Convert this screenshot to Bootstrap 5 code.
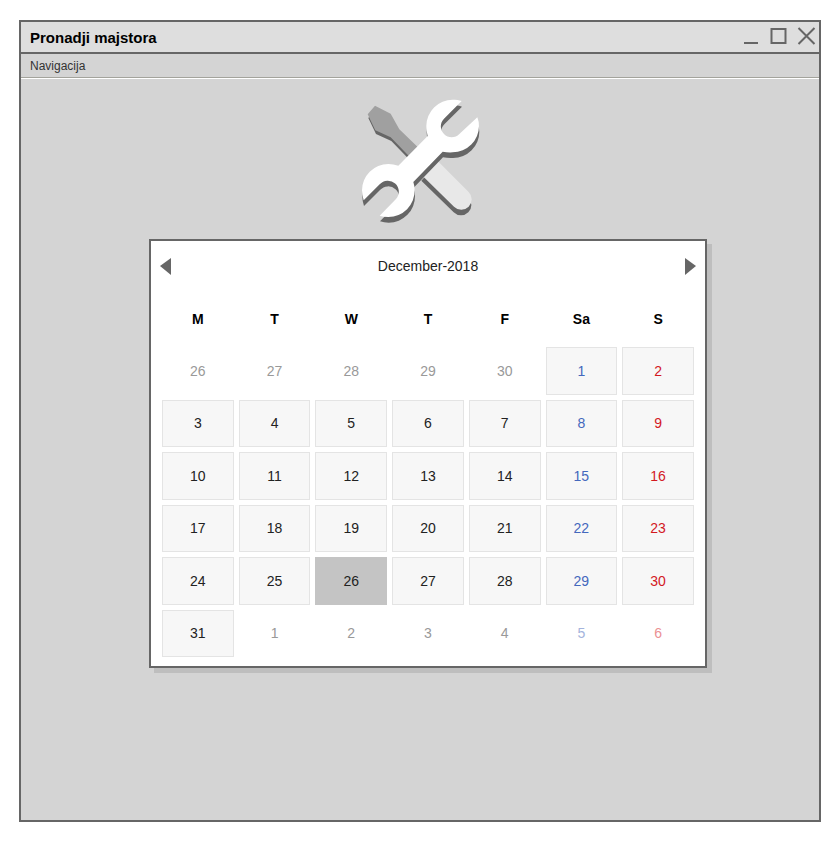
<!DOCTYPE html>
<html lang="sr-Latn">
<head>
<meta charset="utf-8">
<meta name="viewport" content="width=device-width, initial-scale=1">
<title>Pronadji majstora</title>
<link rel="stylesheet" href="https://cdn.jsdelivr.net/npm/bootstrap@5.3.0/dist/css/bootstrap.min.css">
<style>
body { font-family: "Liberation Sans", Arial, sans-serif; font-size: 14px; line-height: 20px; color: #222; background: #fff; padding: 20px 19px 19px; }
.app-window { border: 2px solid #666; background: #d4d4d4; min-height: calc(100vh - 39px); }
.title-bar { background: #dedede; border-bottom: 2px solid #666; height: 32px; padding: 0 3px 0 9px; }
.title-bar h1 { font-size: 15px; line-height: 20px; padding-top: 2px; font-weight: 700; color: #000; }
.plain { border: 0; background: transparent; padding: 0; display: flex; }
.menu-strip { height: 25px; padding: 0 9px; font-size: 12px; border-bottom: 1px solid #fff; box-shadow: inset 0 -1px #a3a39c; }
.menu-strip a { color: #333; }
.logo { margin-top: 11px; }
.shift { padding-left: 16px; }
.calendar { max-width: 558px; margin-top: 9px; border: 2px solid #666; background: #fff; box-shadow: 5px 5px #bebebe; padding: 0 6px 4px; }
.month-bar { height: 49px; padding: 0 2px; }
.month-bar .plain { padding: 1px; }
.days { border-collapse: separate; border-spacing: 5px; table-layout: fixed; height: 372px; }
.days th, .days td { height: 47px; padding: 0; text-align: center; vertical-align: middle; }
.days th { color: #000; }
.day { display: block; width: 100%; height: 100%; padding: 0; border: 1px solid #e4e4e4; background: #f7f7f7; color: #222; }
.sat { color: #4468bd; }
.sun { color: #d3191f; }
.outside { border-color: transparent; background: transparent; color: #999; }
.outside.sat { color: #a4b3dc; }
.outside.sun { color: #eb9093; }
.chosen { background: #c4c4c4; border-color: #c4c4c4; }
</style>
<script src="https://cdn.jsdelivr.net/npm/bootstrap@5.3.0/dist/js/bootstrap.bundle.min.js"></script>
</head>
<body>
<div class="app-window d-flex flex-column">
  <header class="title-bar d-flex align-items-center justify-content-between">
    <h1 class="m-0">Pronadji majstora</h1>
    <div class="d-flex gap-2">
      <button class="plain" type="button" aria-label="Minimize"><svg width="20" height="20"><path d="M4 16H18" stroke="#666" stroke-width="2"/></svg></button>
      <button class="plain" type="button" aria-label="Maximize"><svg width="20" height="20"><rect x="3.5" y="2" width="14" height="14" fill="none" stroke="#666" stroke-width="2"/></svg></button>
      <button class="plain" type="button" aria-label="Close"><svg width="20" height="20"><path d="M2.500 1L18.500 17M18.500 1L2.500 17" stroke="#666" stroke-width="2"/></svg></button>
    </div>
  </header>
  <nav class="menu-strip d-flex align-items-center"><a class="text-decoration-none" href="#">Navigacija</a></nav>
  <main class="d-flex flex-column align-items-center">
    <svg class="logo" width="140" height="140" viewBox="0 0 420 420" role="img" aria-label="Tools">
      <defs>
        <path id="wrench" d="M335 33C328 30 317 29 308 29A79 79 0 0 0 229 108Q229 124 233 138L145 227Q130 222 115 222A79 79 0 0 0 36 301Q36 317 41 331L89 283A32 32 0 0 1 138 327L89 377Q101 381 115 381A79 79 0 0 0 194 301Q194 288 190 276L278 185Q293 188 308 187A79 79 0 0 0 387 108Q387 95 382 82L328 132A32 32 0 0 1 282 86Z"/>
        <path id="shaft" d="M53 73L75 47L122 71L148 118L210 178L183 205L122 142L76 121Z"/>
        <path id="handle" d="M258 208L356 306A31 31 0 0 1 312 350L215 255Z"/>
      </defs>
      <g fill="#666"><use href="#shaft" x="2" y="11"/><use href="#handle" x="-1" y="17"/></g>
      <use href="#shaft" fill="#a0a0a0"/>
      <use href="#handle" fill="#e8e8e8"/>
      <use href="#wrench" x="1" y="17" fill="#666"/>
      <use href="#wrench" fill="#fff"/>
    </svg>
    <div class="shift w-100 d-flex justify-content-center">
      <section class="calendar w-100">
        <div class="month-bar d-flex align-items-center justify-content-between">
          <button class="plain" type="button" aria-label="Previous month"><svg width="11" height="18"><path d="M11 1V18L0 9Z" fill="#666"/></svg></button>
          <span>December-2018</span>
          <button class="plain" type="button" aria-label="Next month"><svg width="11" height="18"><path d="M0 1V18L11 9Z" fill="#666"/></svg></button>
        </div>
        <table class="days w-100">
          <thead><tr><th scope="col">M</th><th scope="col">T</th><th scope="col">W</th><th scope="col">T</th><th scope="col">F</th><th scope="col">Sa</th><th scope="col">S</th></tr></thead>
          <tbody>
            <tr><td><button class="day outside">26</button></td><td><button class="day outside">27</button></td><td><button class="day outside">28</button></td><td><button class="day outside">29</button></td><td><button class="day outside">30</button></td><td><button class="day sat">1</button></td><td><button class="day sun">2</button></td></tr>
            <tr><td><button class="day">3</button></td><td><button class="day">4</button></td><td><button class="day">5</button></td><td><button class="day">6</button></td><td><button class="day">7</button></td><td><button class="day sat">8</button></td><td><button class="day sun">9</button></td></tr>
            <tr><td><button class="day">10</button></td><td><button class="day">11</button></td><td><button class="day">12</button></td><td><button class="day">13</button></td><td><button class="day">14</button></td><td><button class="day sat">15</button></td><td><button class="day sun">16</button></td></tr>
            <tr><td><button class="day">17</button></td><td><button class="day">18</button></td><td><button class="day">19</button></td><td><button class="day">20</button></td><td><button class="day">21</button></td><td><button class="day sat">22</button></td><td><button class="day sun">23</button></td></tr>
            <tr><td><button class="day">24</button></td><td><button class="day">25</button></td><td><button class="day chosen">26</button></td><td><button class="day">27</button></td><td><button class="day">28</button></td><td><button class="day sat">29</button></td><td><button class="day sun">30</button></td></tr>
            <tr><td><button class="day">31</button></td><td><button class="day outside">1</button></td><td><button class="day outside">2</button></td><td><button class="day outside">3</button></td><td><button class="day outside">4</button></td><td><button class="day outside sat">5</button></td><td><button class="day outside sun">6</button></td></tr>
          </tbody>
        </table>
      </section>
    </div>
  </main>
</div>
</body>
</html>
